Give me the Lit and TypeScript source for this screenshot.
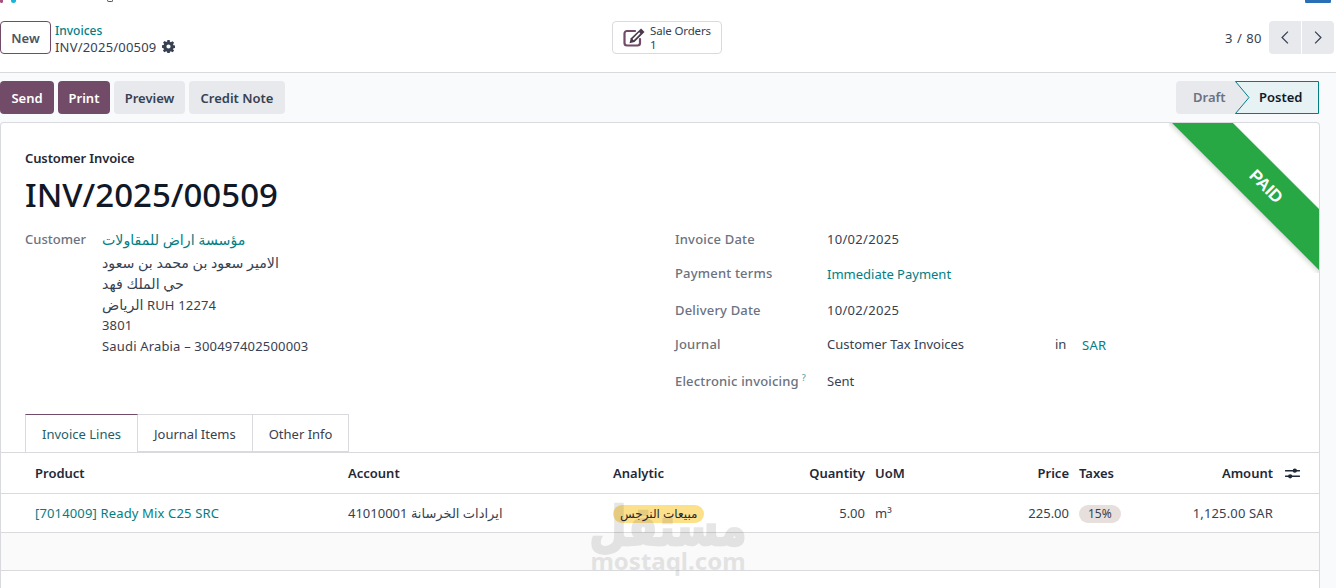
import { LitElement, html, css, svg } from "lit";
import { customElement } from "lit/decorators.js";

const gear = html`<svg class="gear" viewBox="0 0 16 16" width="13" height="13"><path fill="#374151" fill-rule="evenodd" d="M6.600 0h2.800l.4 2.200 1.200.5 1.900-1.300 2 2-1.300 1.900.5 1.200 2.200.4v2.800l-2.200.4-.5 1.200 1.300 1.900-2 2-1.900-1.300-1.200.5-.4 2.200H6.600l-.4-2.200-1.200-.5-1.900 1.300-2-2 1.300-1.900-.5-1.200L-.1 9.400V6.600l2.200-.4.5-1.200-1.300-1.900 2-2 1.900 1.300 1.200-.5zM8 5.400a2.600 2.600 0 1 0 0 5.200 2.600 2.600 0 0 0 0-5.200z"/></svg>`;

const edit = html`<svg viewBox="0 0 22 19" width="22" height="19"><path fill="none" stroke="#714b67" stroke-width="2.200" stroke-linecap="round" d="M12 3H4a2.500 2.500 0 0 0-2.500 2.500V15a2.500 2.500 0 0 0 2.500 2.500h10.500A2.500 2.500 0 0 0 17 15v-4"/><path fill="#4a3a4a" d="M18.100.6l3.400 3.400-10 10-5 1.300 1.300-5z"/><path fill="#fff" d="M16.200 4.300l1.200 1.200-6.700 6.700-1.200-1.200z"/></svg>`;

const chevL = html`<svg viewBox="0 0 12 18" width="10" height="15"><path d="M9.500 2L2.500 9l7 7" fill="none" stroke="#374151" stroke-width="1.500"/></svg>`;
const chevR = html`<svg viewBox="0 0 12 18" width="10" height="15"><path d="M2.500 2l7 7-7 7" fill="none" stroke="#374151" stroke-width="1.500"/></svg>`;

const sliders = html`<svg viewBox="0 0 16 14" width="15" height="13"><path d="M0 4h16M0 10h16" stroke="#1f2937" stroke-width="1.500"/><circle cx="10.500" cy="4" r="2.300" fill="#1f2937"/><circle cx="5.500" cy="10" r="2.300" fill="#1f2937"/></svg>`;

const postedShape = svg`<polygon points="0.500,0.500 83.500,0.500 83.500,32.500 0.500,32.500 14,16.500" fill="#e6f2f3"/><polyline points="0.500,0.500 83.500,0.500 83.500,32.500 0.500,32.500 14,16.500 0.500,0.500" fill="none" stroke="#017e84"/>`;

@customElement("app-root")
export class AppRoot extends LitElement {
  static styles = css`
    :host {
      display: block;
      width: 1336px;
      height: 588px;
      overflow: hidden;
      position: relative;
      background: #f9fafb;
      font-family: "Noto Sans", "DejaVu Sans", sans-serif;
      font-size: 13px;
      color: #374151;
    }
    a { color: #017e84; text-decoration: none; }
    .clip {
      height: 3px;
      background: #fff;
      overflow: hidden;
      display: flex;
      padding: 0 5px 0 0;
    }
    .clip i { display: block; height: 3px; }
    .clip .c1 { width: 3px; background: #a8507a; border-radius: 0 0 3px 3px; margin-right: 8px; }
    .clip .c2 { width: 5px; background: #17b5d9; border-radius: 0 0 3px 3px; margin-right: 91px; }
    .clip .c3 { width: 6px; height: 2px; border: 1px solid #555; border-top: 0; border-radius: 0 0 3px 3px; box-sizing: border-box; margin-right: auto; }
    .clip b { display: block; width: 26px; height: 4px; background: #2a6fb5; border-radius: 0 0 3px 3px; }
    .panel {
      height: 70px;
      box-sizing: border-box;
      background: #fff;
      border-bottom: 1px solid #d8dadd;
      display: grid;
      grid-template-columns: 1fr auto 1fr;
      align-items: center;
      padding: 0 2px 0 0;
    }
    .left { display: flex; align-items: center; gap: 4px; }
    .btn {
      display: flex;
      align-items: center;
      justify-content: center;
      box-sizing: border-box;
      height: 33px;
      border-radius: 4px;
      font-weight: 600;
      font-size: 13px;
      white-space: nowrap;
    }
    .new { width: 51px; height: 33px; border: 1px solid #714b67; color: #4b5563; background: #fff; }
    .crumbs { line-height: 16px; padding-top: 2px; }
    .crumbs a { display: block; font-size: 12px; font-weight: 500; }
    .crumbs div { display: flex; align-items: center; gap: 6px; color: #374151; font-size: 13px; }
    .crumbs span { letter-spacing: 0.2px; }
    .sale {
      display: flex;
      align-items: center;
      gap: 5px;
      width: 110px;
      height: 33px;
      box-sizing: border-box;
      padding-left: 10px;
      border: 1px solid #d8dadd;
      border-radius: 4px;
      font-size: 11.5px;
      letter-spacing: -0.15px;
      line-height: 14px;
    }
    .sale svg { flex: none; }
    .sale div { padding-top: 1px; }
    .pager { display: flex; justify-content: flex-end; align-items: center; gap: 7px; }
    .pager span { letter-spacing: 0.5px; }
    .nav { display: flex; gap: 1px; }
    .nav div {
      width: 32px;
      height: 33px;
      background: #e7e9ed;
      display: flex;
      align-items: center;
      justify-content: center;
    }
    .nav div:first-child { border-radius: 4px 0 0 4px; }
    .nav div:last-child { border-radius: 0 4px 4px 0; }
    .actions {
      height: 49px;
      box-sizing: border-box;
      display: flex;
      justify-content: space-between;
      padding: 8px 17px 0 0;
    }
    .actions .group { display: flex; gap: 4px; }
    .primary { background: #714b67; color: #fff; }
    .secondary { background: #e7e9ed; color: #374151; }
    .status { display: flex; height: 33px; font-weight: 600; }
    .draft {
      width: 73px;
      box-sizing: border-box;
      padding-left: 17px;
      background: #e7e9ed;
      color: #6b7280;
      border-radius: 4px 0 0 4px;
      line-height: 33px;
    }
    .posted {
      position: relative;
      width: 84px;
      margin-left: -14px;
      box-sizing: border-box;
      padding-left: 24px;
      line-height: 33px;
      color: #111827;
    }
    .posted svg { position: absolute; inset: 0; }
    .posted span { position: relative; }
    .sheet {
      position: relative;
      width: 1320px;
      height: 466px;
      box-sizing: border-box;
      background: #fff;
      border: 1px solid #d8dadd;
      border-bottom: 0;
      border-radius: 4px 4px 0 0;
      overflow: hidden;
    }
    .ribbon {
      position: absolute;
      top: 0;
      right: 0;
      width: 150px;
      height: 150px;
      overflow: hidden;
    }
    .ribbon div {
      position: absolute;
      left: -53px;
      top: 42px;
      width: 300px;
      height: 43px;
      line-height: 43px;
      background: #28a745;
      color: #fff;
      text-align: center;
      font-family: "Liberation Sans", sans-serif;
      font-weight: 700;
      font-size: 17px;
      transform: rotate(45deg);
      box-shadow: 0 2px 5px rgba(0, 0, 0, 0.18);
    }
    .head { padding: 26px 0 0 24px; height: 105px; box-sizing: border-box; }
    .kind { font-weight: 600; line-height: 18px; color: #1f2937; letter-spacing: -0.12px; }
    h1 {
      margin: 5px 0 0;
      font-size: 33px;
      line-height: 46px;
      font-weight: 500;
      color: #111827;
    }
    .form {
      display: grid;
      grid-template-columns: 650px 1fr;
      padding-left: 24px;
      height: 186px;
    }
    .customer { display: grid; grid-template-columns: 77px 1fr; align-content: start; line-height: 21px; padding-top: 1px; }
    .label { font-weight: 500; color: #6b7280; letter-spacing: 0.18px; }
    .customer .label { letter-spacing: 0; }
    .address { letter-spacing: 0.17px; }
    .address a { display: block; height: 21px; margin-bottom: 2px; }
    .address .line { height: 21px; }
    .address .ar { font-size: 14.2px; letter-spacing: 0; line-height: 21px; }
    .rows {
      display: grid;
      grid-template-columns: 152px 228px 27px 1fr;
      grid-template-rows: 34px 37px 34px 37px 34px;
      align-items: start;
      align-content: start;
      line-height: 20px;
      margin-top: 1px;
    }
    .rows .wide { grid-column: span 3; }
    .rows .date { letter-spacing: 0.3px; }
    .rows .link { margin-top: 1px; }
    .rows .cur { letter-spacing: 0.3px; margin-top: 1px; }
    .rows sup { font-size: 9px; color: #5aa7ab; margin-left: 3px; line-height: 0; }
    .tabs { display: flex; padding-left: 24px; height: 39px; box-sizing: border-box; border-bottom: 1px solid #d8dadd; }
    .tab {
      padding: 0 16px;
      height: 38px;
      line-height: 39px;
      border: 1px solid #d8dadd;
      border-left: 0;
      box-sizing: border-box;
      color: #374151;
    }
    .tab.active {
      height: 39px;
      border-left: 1px solid #d8dadd;
      border-top-color: #714b67;
      background: #fff;
      color: #1f5f6b;
    }
    .grid {
      display: grid;
      grid-template-columns: 303px 255px 147px 95px 55px 129px 51px 133px 20px;
      column-gap: 10px;
      padding-left: 34px;
      align-items: center;
    }
    .thead { height: 41px; box-sizing: border-box; border-bottom: 1px solid #d8dadd; font-weight: 600; color: #1f2937; }
    .thead svg { display: block; margin: 1px 0 0 2px; }
    .trow { height: 39px; border-bottom: 1px solid #d8dadd; box-sizing: border-box; }
    .prod { letter-spacing: 0.15px; }
    .r { text-align: right; }
    .amount { letter-spacing: 0.15px; }
    .empty { height: 38px; box-sizing: border-box; background: #fafafa; border-bottom: 1px solid #d8dadd; }
    .pill {
      display: inline-block;
      border-radius: 9px;
      height: 18px;
      line-height: 18px;
      font-size: 12px;
      padding: 0 7px;
      white-space: nowrap;
    }
    .yellow { background: #fde08a; color: #1f2937; }
    .tax { background: #e6dfdc; padding: 0 9px; }
    .mark {
      position: absolute;
      left: 588px;
      top: 503px;
      width: 160px;
      text-align: center;
      pointer-events: none;
      color: #3c3c3c;
      opacity: 0.12;
      font-family: "DejaVu Sans", sans-serif;
      font-weight: 700;
    }
    .mark .ar { font-size: 43px; line-height: 46px; -webkit-text-stroke: 2px #3c3c3c; transform: scaleY(1.25); }
    .mark .en { font-size: 24px; line-height: 28px; margin-top: -2px; font-family: "Noto Sans", sans-serif; }
  `;

  render() {
    return html`
      <div class="clip"><i class="c1"></i><i class="c2"></i><i class="c3"></i><b></b></div>
      <div class="panel">
        <div class="left">
          <div class="btn new">New</div>
          <div class="crumbs"><a>Invoices</a><div><span>INV/2025/00509</span> ${gear}</div></div>
        </div>
        <div class="sale">${edit}<div>Sale Orders<br />1</div></div>
        <div class="pager">
          <span>3 / 80</span>
          <div class="nav"><div>${chevL}</div><div>${chevR}</div></div>
        </div>
      </div>
      <div class="actions">
        <div class="group">
          <div class="btn primary" style="width:54px">Send</div>
          <div class="btn primary" style="width:52px">Print</div>
          <div class="btn secondary" style="width:71px">Preview</div>
          <div class="btn secondary" style="width:96px">Credit Note</div>
        </div>
        <div class="status">
          <div class="draft">Draft</div>
          <div class="posted">
            <svg width="84" height="33" viewBox="0 0 84 33">${postedShape}</svg>
            <span>Posted</span>
          </div>
        </div>
      </div>
      <div class="sheet">
        <div class="ribbon"><div>PAID</div></div>
        <div class="head">
          <div class="kind">Customer Invoice</div>
          <h1>INV/2025/00509</h1>
        </div>
        <div class="form">
          <div class="customer">
            <div class="label">Customer</div>
            <div class="address">
              <a class="ar">مؤسسة اراض للمقاولات</a>
              <div class="line"><span class="ar">الامير سعود بن محمد بن سعود</span></div>
              <div class="line"><span class="ar">حي الملك فهد</span></div>
              <div class="line"><span class="ar">الرياض</span> RUH 12274</div>
              <div class="line">3801</div>
              <div class="line">Saudi Arabia – 300497402500003</div>
            </div>
          </div>
          <div class="rows">
            <div class="label">Invoice Date</div><div class="wide date">10/02/2025</div>
            <div class="label">Payment terms</div><div class="wide link"><a>Immediate Payment</a></div>
            <div class="label">Delivery Date</div><div class="wide date">10/02/2025</div>
            <div class="label">Journal</div><div>Customer Tax Invoices</div><div>in</div><a class="cur">SAR</a>
            <div class="label">Electronic invoicing<sup>?</sup></div><div class="wide">Sent</div>
          </div>
        </div>
        <div class="tabs">
          <div class="tab active">Invoice Lines</div>
          <div class="tab">Journal Items</div>
          <div class="tab">Other Info</div>
        </div>
        <div class="grid thead">
          <div>Product</div><div>Account</div><div>Analytic</div><div class="r">Quantity</div><div>UoM</div>
          <div class="r">Price</div><div>Taxes</div><div class="r">Amount</div><div>${sliders}</div>
        </div>
        <div class="grid trow">
          <div><a class="prod">[7014009] Ready Mix C25 SRC</a></div>
          <div>41010001 ايرادات الخرسانة</div>
          <div><span class="pill yellow">مبيعات النرجس</span></div>
          <div class="r">5.00</div><div>m³</div><div class="r">225.00</div>
          <div><span class="pill tax">15%</span></div>
          <div class="r amount">1,125.00 SAR</div><div></div>
        </div>
        <div class="empty"></div>
      </div>
      <div class="mark"><div class="ar">مستقل</div><div class="en">mostaql.com</div></div>
    `;
  }
}
